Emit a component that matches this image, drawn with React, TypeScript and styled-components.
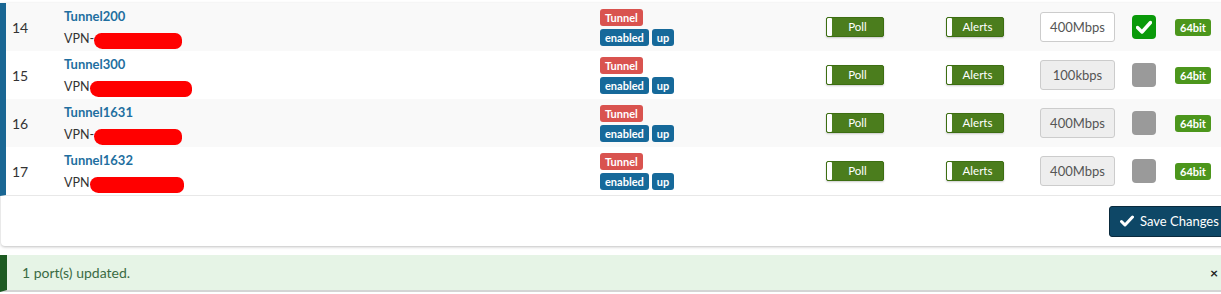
import styled, { createGlobalStyle } from 'styled-components';

interface Port {
  id: number;
  name: string;
  dash: boolean;
  redact: number;
  speed: string;
  active: boolean;
}

const ports: Port[] = [
  { id: 14, name: 'Tunnel200', dash: true, redact: 88, speed: '400Mbps', active: true },
  { id: 15, name: 'Tunnel300', dash: false, redact: 102, speed: '100kbps', active: false },
  { id: 16, name: 'Tunnel1631', dash: true, redact: 88, speed: '400Mbps', active: false },
  { id: 17, name: 'Tunnel1632', dash: false, redact: 94, speed: '400Mbps', active: false },
];

const GlobalStyle = createGlobalStyle`
  html, body {
    margin: 0;
    padding: 0;
    background: #fff;
    overflow: hidden;
  }
  body {
    font-family: Lato, 'Liberation Sans', sans-serif;
    color: #333;
  }
`;

const App = () => {
  return (
    <Page>
      <GlobalStyle />
      <Panel>
        <Rows>
          {ports.map((p, i) => (
            <Row key={p.id} striped={i % 2 === 0}>
              <NumCell>{p.id}</NumCell>
              <NameCell>
                <PortName href="#">{p.name}</PortName>
                <PortDesc>
                  VPN{p.dash ? '-' : ''}
                  <Redact style={{ width: p.redact }} />
                </PortDesc>
              </NameCell>
              <BadgeCell>
                <BadgeLine>
                  <Label tone="red">Tunnel</Label>
                </BadgeLine>
                <BadgeLine>
                  <Label tone="blue">enabled</Label>
                  <Label tone="blue">up</Label>
                </BadgeLine>
              </BadgeCell>
              <Cell>
                <Toggle>
                  <ToggleKnob />
                  <ToggleText>Poll</ToggleText>
                </Toggle>
              </Cell>
              <Cell>
                <Toggle>
                  <ToggleKnob />
                  <ToggleText>Alerts</ToggleText>
                </Toggle>
              </Cell>
              <Cell>
                <SpeedInput enabled={p.active}>{p.speed}</SpeedInput>
              </Cell>
              <Cell>
                <CheckBox checked={p.active}>
                  {p.active && (
                    <svg width="16" height="14" viewBox="0 0 16 14">
                      <path d="M1.5 7.5 L6 12 L14.5 2.5" fill="none" stroke="#fff" strokeWidth="3.4" strokeLinecap="round" strokeLinejoin="round" />
                    </svg>
                  )}
                </CheckBox>
              </Cell>
              <Cell>
                <Label tone="green">64bit</Label>
              </Cell>
            </Row>
          ))}
        </Rows>
        <Footer>
          <SaveButton>
            <svg width="14" height="12" viewBox="0 0 14 12">
              <path d="M1.5 6.5 L5 10 L12.5 2" fill="none" stroke="#fff" strokeWidth="3" strokeLinecap="round" strokeLinejoin="round" />
            </svg>
            Save Changes
          </SaveButton>
        </Footer>
      </Panel>
      <Alert>
        <span>1 port(s) updated.</span>
        <Close>×</Close>
      </Alert>
    </Page>
  );
};

export default App;

const Page = styled.div`
  width: 1240px;
  padding-top: 3px;
`;

const Panel = styled.div`
  margin-left: 1px;
  background: #fff;
  border-radius: 0 0 4px 4px;
  box-shadow: 0 1px 3px rgba(0, 0, 0, 0.25);
`;

const Rows = styled.div`
  border-left: 6px solid #1a6794;
  margin-left: -1px;
  border-bottom: 1px solid #e8e8e8;
`;

const Row = styled.div<{ striped: boolean }>`
  display: grid;
  grid-template-columns: 52px 536px 226px 120px 94px 92px 43px 1fr;
  align-items: center;
  height: 48px;
  background: ${props => (props.striped ? '#f9f9f9' : '#fff')};
`;

const Cell = styled.div`
  padding-left: 6px;
  display: flex;
  align-items: center;
`;

const NumCell = styled(Cell)`
  font-size: 14px;
  color: #333;
`;

const NameCell = styled.div`
  padding-left: 6px;
  display: flex;
  flex-direction: column;
  gap: 5px;
  padding-top: 2px;
`;

const PortName = styled.a`
  font-size: 13px;
  font-weight: bold;
  color: #1f6fa0;
  text-decoration: none;
  line-height: 16px;
`;

const PortDesc = styled.div`
  font-size: 12.5px;
  color: #333;
  line-height: 16px;
  display: flex;
  align-items: center;
`;

const Redact = styled.span`
  display: inline-block;
  height: 16px;
  margin-top: 4px;
  background: #ff0000;
  border-radius: 9px 8px 8px 10px;
`;

const BadgeCell = styled.div`
  padding-left: 6px;
  display: flex;
  flex-direction: column;
  gap: 3px;
`;

const BadgeLine = styled.div`
  display: flex;
  gap: 3px;
`;

const toneColors: Record<string, string> = {
  red: '#d9534f',
  blue: '#16699a',
  green: '#4c961c',
};

const Label = styled.span<{ tone: string }>`
  display: inline-block;
  background: ${props => toneColors[props.tone]};
  color: #fff;
  font-size: 11px;
  font-weight: bold;
  line-height: 17px;
  padding: 0 5px;
  border-radius: 3px;
`;

const Toggle = styled.div`
  display: flex;
  align-items: stretch;
  width: 58px;
  height: 20px;
  box-sizing: border-box;
  background: #4b7d1d;
  border: 1px solid #3d6e12;
  border-radius: 2px;
  box-shadow: 0 1px 2px rgba(0, 0, 0, 0.2);
  overflow: hidden;
`;

const ToggleKnob = styled.span`
  width: 5px;
  background: #fff;
  border-radius: 1px;
`;

const ToggleText = styled.span`
  flex: 1;
  text-align: center;
  color: #fff;
  font-size: 11.5px;
  line-height: 18px;
`;

const SpeedInput = styled.div<{ enabled: boolean }>`
  width: 75px;
  height: 30px;
  box-sizing: border-box;
  border: 1px solid #ccc;
  border-radius: 3px;
  background: ${props => (props.enabled ? '#fff' : '#eee')};
  color: #555;
  font-size: 13px;
  display: flex;
  align-items: center;
  justify-content: center;
`;

const CheckBox = styled.div<{ checked: boolean }>`
  width: 24px;
  height: 24px;
  border-radius: 4px;
  background: ${props => (props.checked ? '#0a9a0a' : '#9a9a9a')};
  display: flex;
  align-items: center;
  justify-content: center;
`;

const Footer = styled.div`
  height: 50px;
  display: flex;
  align-items: center;
  padding-left: 1108px;
`;

const SaveButton = styled.button`
  display: flex;
  align-items: center;
  gap: 6px;
  height: 31px;
  padding: 0 12px 0 10px;
  background: #0e4766;
  border: 1px solid #0a2a3d;
  border-radius: 3px;
  color: #fff;
  font-family: Lato, 'Liberation Sans', sans-serif;
  font-size: 13px;
  white-space: nowrap;
`;

const Alert = styled.div`
  margin-top: 9px;
  height: 37px;
  box-sizing: border-box;
  display: flex;
  align-items: center;
  justify-content: space-between;
  padding: 0 22px 0 15px;
  width: 1240px;
  background: #e6f4e6;
  border-left: 7px solid #1d5a21;
  border-bottom: 2px solid #d4d4d4;
  color: #3a6b44;
  font-size: 14px;
`;

const Close = styled.span`
  font-weight: bold;
  font-size: 14px;
  color: #222;
`;
